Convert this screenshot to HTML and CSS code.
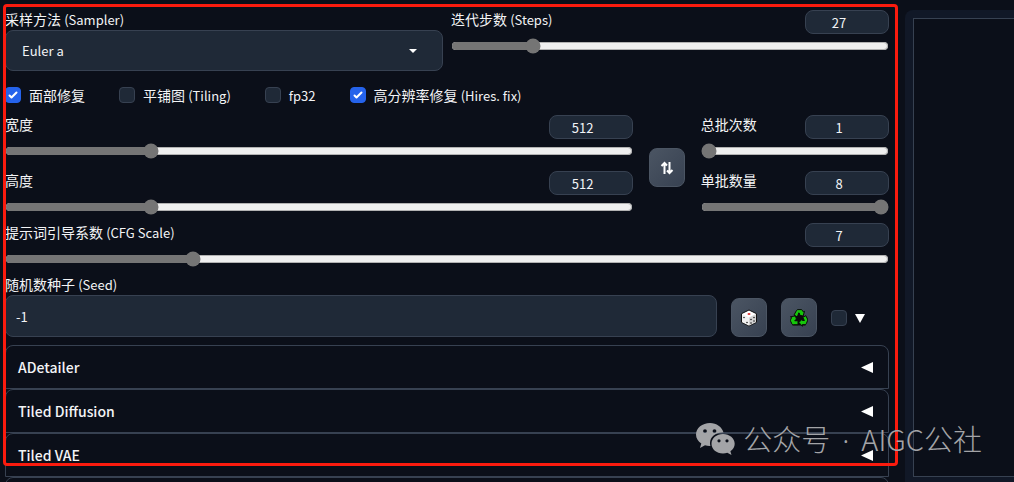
FILE: index.html
```
<!DOCTYPE html>
<html lang="zh-CN">
<head>
  <meta charset="UTF-8" />
  <title>Stable Diffusion</title>
  <meta name="viewport" content="width=device-width, initial-scale=1.0">
  <link rel="stylesheet" href="styles.css">
</head>

<body>
  <div class="page">
    <main class="settings">

      <div class="row two-cols">
        <div class="field">
          <label for="sampler">采样方法 <span class="en">(Sampler)</span></label>
          <div class="select-wrap">
            <select id="sampler">
              <option>Euler a</option>
              <option>Euler</option>
              <option>DDIM</option>
            </select>
            <svg class="caret" viewBox="0 0 8 4" width="8" height="4"><path d="M0 0h8L4 4z" fill="#fff"/></svg>
          </div>
        </div>
        <div class="slider">
          <div class="slider-head">
            <label for="steps">迭代步数 <span class="en">(Steps)</span></label>
            <input class="num" type="number" value="27" aria-label="Steps">
          </div>
          <input type="range" id="steps" min="1" max="150" value="27">
        </div>
      </div>

      <div class="checks">
        <label><input type="checkbox" checked><span>面部修复</span></label>
        <label><input type="checkbox"><span>平铺图 <span class="en">(Tiling)</span></span></label>
        <label><input type="checkbox"><span class="en">fp32</span></label>
        <label><input type="checkbox" checked><span>高分辨率修复 <span class="en">(Hires. fix)</span></span></label>
      </div>

      <div class="row sizes">
        <div class="stack">
          <div class="slider">
            <div class="slider-head">
              <label for="width">宽度</label>
              <input class="num" type="number" value="512" aria-label="Width">
            </div>
            <input type="range" id="width" min="64" max="2048" value="512">
          </div>
          <div class="slider">
            <div class="slider-head">
              <label for="height">高度</label>
              <input class="num" type="number" value="512" aria-label="Height">
            </div>
            <input type="range" id="height" min="64" max="2048" value="512">
          </div>
        </div>

        <button class="tool swap" aria-label="Swap width and height">
          <svg viewBox="0 0 14 14" width="14" height="14" fill="none" stroke="#fff" stroke-width="2">
            <path d="M4.500 13V2M1.500 5l3-3 2.500 2.500M9.500 1v11M7 9.500l2.500 2.500 3-3"/>
          </svg>
        </button>

        <div class="stack">
          <div class="slider">
            <div class="slider-head">
              <label for="count">总批次数</label>
              <input class="num" type="number" value="1" aria-label="Batch count">
            </div>
            <input type="range" id="count" min="1" max="100" value="1">
          </div>
          <div class="slider">
            <div class="slider-head">
              <label for="batch">单批数量</label>
              <input class="num" type="number" value="8" aria-label="Batch size">
            </div>
            <input type="range" id="batch" min="1" max="8" value="8">
          </div>
        </div>
      </div>

      <div class="slider cfg">
        <div class="slider-head">
          <label for="cfg">提示词引导系数 <span class="en">(CFG Scale)</span></label>
          <input class="num" type="number" value="7" aria-label="CFG Scale">
        </div>
        <input type="range" id="cfg" min="1" max="30" value="7">
      </div>

      <div class="seed-row">
        <div class="field seed">
          <label for="seed">随机数种子 <span class="en">(Seed)</span></label>
          <input type="text" id="seed" value="-1">
        </div>
        <button class="tool" aria-label="Random seed">
          <svg viewBox="0 0 18 18" width="18" height="18">
            <path d="M9 1l7.500 3.700v8.600L9 17l-7.500-3.700V4.700z" fill="#fff" stroke="#111" stroke-width="1"/>
            <path d="M9 8.500l7-3.500v8L9 16.500z" fill="#d4d4d4"/>
            <path d="M2 5l7 3.500V16.500l-7-3.500z" fill="#f0f0f0"/>
            <ellipse cx="9" cy="5" rx="1.500" ry="1" fill="#d33"/>
            <g fill="#222">
              <circle cx="4" cy="8.500" r=".8"/><circle cx="7" cy="13.500" r=".8"/>
              <circle cx="11" cy="10.500" r=".8"/><circle cx="14" cy="8.500" r=".8"/><circle cx="11" cy="14" r=".8"/><circle cx="14" cy="12" r=".8"/>
            </g>
          </svg>
        </button>
        <button class="tool" aria-label="Reuse seed">
          <svg viewBox="0 0 18 18" width="18" height="18">
            <path d="M9 1L17 12l-1.500 4.500h-13L1 12z" fill="#0a0a0a"/>
            <g fill="#16c60c" stroke="#0a0a0a" stroke-width="1" stroke-linejoin="round">
              <path d="M4 6L6.500 1.500Q7 .6 8 .6h3q1 0 1.500.9l.8 1.400 1.200-.5-1.400 4.700L8.800 6l1.200-.8-1.200-1.400L7.300 8z"/>
              <path d="M12.800 8.400l3-1.700 1.700 3.300q.5.900 0 1.800l-1.200 2.900q-.4.900-1.400.9h-2.500v1.700L8.900 13.500l3.500-3.700v1.700h2z"/>
              <path d="M8 11.700v4H3.300q-1 0-1.500-.9L.6 12.200q-.4-.8 0-1.600l1-2L.4 7.800l5-.9 1.500 4.600-1.500-.7-.6 1z"/>
            </g>
          </svg>
        </button>
        <label class="extra"><input type="checkbox" aria-label="Extra seed options"><svg viewBox="0 0 10 9" width="10" height="9"><path d="M0 0h10L5 9z" fill="#fff"/></svg></label>
      </div>

      <div class="accordions">
        <button class="accordion"><span>ADetailer</span><svg viewBox="0 0 12 11" width="12" height="11"><path d="M12 0v11L0 5.500z" fill="#fff"/></svg></button>
        <button class="accordion"><span>Tiled Diffusion</span><svg viewBox="0 0 12 11" width="12" height="11"><path d="M12 0v11L0 5.500z" fill="#fff"/></svg></button>
        <button class="accordion"><span>Tiled VAE</span><svg viewBox="0 0 12 11" width="12" height="11"><path d="M12 0v11L0 5.500z" fill="#fff"/></svg></button>
        <button class="accordion" aria-label="More"></button>
      </div>

      <div class="frame"></div>
    </main>

    <aside class="output">
      <div class="gallery"></div>
    </aside>
  </div>

  <div class="watermark">
    <svg viewBox="0 0 40 32" width="40" height="32" fill="#a3a4a7">
      <path fill-rule="evenodd" d="M14 0C6.300 0 0 5 0 11.500c0 3.700 2 6.900 5.300 9L4 25l5-2.700c1.700.5 3.500.8 5.400.7A11 11 0 0 1 14 20c0-6 5.500-10.500 12.500-10.500h1C26 4 20.500 0 14 0zM9 6.200a1.900 1.900 0 1 1 0 3.800 1.900 1.900 0 0 1 0-3.800zm9.500 0a1.900 1.900 0 1 1 0 3.800 1.900 1.900 0 0 1 0-3.800z"/>
      <path fill-rule="evenodd" d="M27 11c-6.500 0-11.500 4.300-11.500 9.700S20.500 30.500 27 30.500c1.500 0 3-.2 4.300-.7l4.200 2.200-1.100-3.700c2.700-1.800 4.300-4.500 4.300-7.600C38.700 15.300 33.500 11 27 11zm-4 5.200a1.600 1.600 0 1 1 0 3.200 1.600 1.600 0 0 1 0-3.200zm8 0a1.600 1.600 0 1 1 0 3.200 1.600 1.600 0 0 1 0-3.200z"/>
    </svg>
    <span>公众号<span class="dot">·</span>AIGC公社</span>
  </div>
</body>
</html>
```
FILE: styles.css
```
:root {
  --bg: #0b0f19;
  --panel: #111827;
  --input: #1f2937;
  --border: #374151;
  --text: #f3f4f6;
}

* {
  box-sizing: border-box;
}

body {
  margin: 0;
  height: 100vh;
  overflow: hidden;
  position: relative;
  background: var(--bg);
  color: var(--text);
  font-family: "Noto Sans CJK SC", sans-serif;
  font-size: 14px;
  line-height: 18px;
}

input,
select,
button {
  margin: 0;
  font: inherit;
  font-size: 13px;
  color: inherit;
}

.en {
  font-size: 13px;
  line-height: 1;
}

.page {
  display: grid;
  grid-template-columns: minmax(0, 1fr) 109px;
  grid-template-rows: minmax(0, 1fr);
  gap: 16px;
  height: 100vh;
  padding: 10px 0 0 5px;
  overflow: hidden;
}

.settings {
  position: relative;
}

.row {
  display: grid;
}

.two-cols {
  grid-template-columns: 1fr 1fr;
  gap: 8px;
}

.field label {
  display: block;
  padding-bottom: 2px;
}

.select-wrap {
  display: grid;
  align-items: center;
}

.select-wrap select,
.caret {
  grid-area: 1 / 1;
}

.caret {
  justify-self: end;
  margin-right: 26px;
}

select {
  appearance: none;
  width: 100%;
  height: 41px;
  padding: 0 16px;
  border: 1px solid var(--border);
  border-radius: 8px;
  background: var(--input);
}

.slider {
  display: flex;
  flex-direction: column;
  gap: 4px;
}

.slider-head {
  display: flex;
  justify-content: space-between;
  align-items: flex-start;
}

.num {
  width: 84px;
  height: 24px;
  padding: 0 16px 0 0;
  border: 1px solid var(--border);
  border-radius: 8px;
  background: var(--input);
  text-align: center;
  appearance: textfield;
}

.num::-webkit-inner-spin-button {
  display: none;
}

input[type="range"] {
  width: 100%;
  height: 16px;
  accent-color: #757575;
}

.checks {
  display: flex;
  gap: 34px;
  margin: 15px 0 11px;
}

.checks label,
.extra {
  display: flex;
  align-items: center;
  gap: 8px;
}

input[type="checkbox"] {
  appearance: none;
  width: 16px;
  height: 16px;
  border: 1px solid var(--border);
  border-radius: 4px;
  background: var(--input);
}

input[type="checkbox"]:checked {
  border-color: #2563eb;
  background: #2563eb url("data:image/svg+xml,%3Csvg viewBox='0 0 16 16' fill='white' xmlns='http://www.w3.org/2000/svg'%3E%3Cpath d='M12.207 4.793a1 1 0 010 1.414l-5 5a1 1 0 01-1.414 0l-2-2a1 1 0 011.414-1.414L6.500 9.086l4.293-4.293a1 1 0 011.414 0z'/%3E%3C/svg%3E") center / 16px;
}

.sizes {
  grid-template-columns: 10fr 36px 3fr;
  gap: 16px;
}

.stack {
  display: flex;
  flex-direction: column;
  gap: 12px;
}

.tool {
  display: flex;
  align-items: center;
  justify-content: center;
  flex: none;
  width: 36px;
  height: 39px;
  padding: 0;
  border: 1px solid #4b5563;
  border-radius: 8px;
  background: linear-gradient(to bottom right, #4b5563, #374151);
}

.swap {
  align-self: end;
  margin-bottom: 28px;
}

.cfg {
  margin-top: 8px;
}

.seed-row {
  display: flex;
  align-items: flex-end;
  gap: 14px;
  margin-top: 8px;
}

.seed {
  flex: 1;
}

.seed input {
  width: 100%;
  height: 42px;
  padding: 0 10px;
  border: 1px solid var(--border);
  border-radius: 8px;
  background: var(--input);
}

.extra {
  height: 38px;
  padding-right: 24px;
}

.accordions {
  margin-top: 8px;
}

.accordion {
  display: flex;
  align-items: center;
  justify-content: space-between;
  width: 100%;
  height: 44px;
  padding: 0 15px 0 12px;
  border: 1px solid var(--border);
  border-radius: 8px 8px 0 0;
  background: none;
  font-size: 14px;
  font-weight: 500;
}

/* red outline drawn over the settings column */
.frame {
  position: absolute;
  inset: -6px -9px 16px -2px;
  border: 3px solid #fb1b0e;
  border-radius: 4px;
  pointer-events: none;
}

.output {
  padding: 8px 0 5px 8px;
  border-radius: 8px 0 0 0;
  background: var(--panel);
}

.gallery {
  height: 100%;
  border: 1px solid var(--border);
  border-right: 0;
  background: var(--bg);
}

.watermark {
  position: absolute;
  right: 32px;
  bottom: 24px;
  display: flex;
  align-items: center;
  gap: 7px;
  color: #a3a4a7;
  font-size: 29px;
  font-weight: 300;
  line-height: 36px;
}

.dot {
  margin: 0 12px;
  font-family: "Noto Sans", sans-serif;
}
```
